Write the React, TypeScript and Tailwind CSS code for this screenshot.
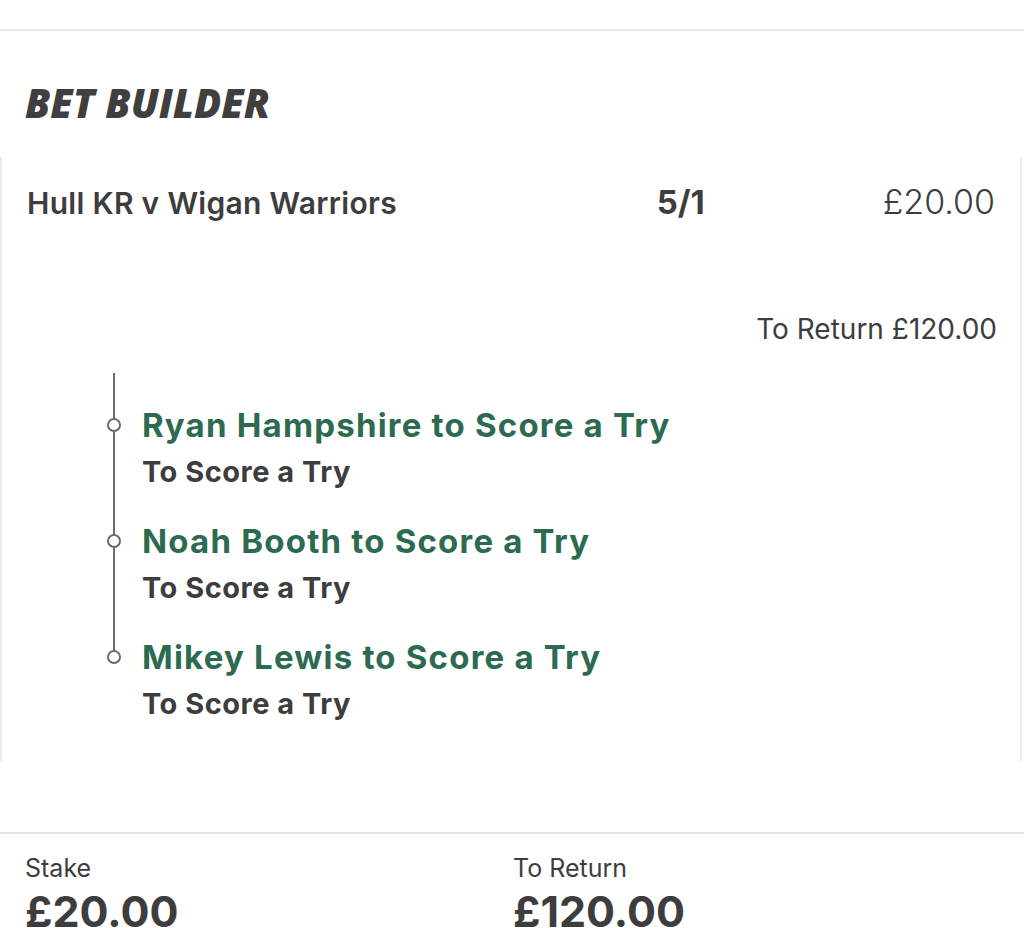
import React from 'react';

const selections = [
  { name: 'Ryan Hampshire to Score a Try', market: 'To Score a Try' },
  { name: 'Noah Booth to Score a Try', market: 'To Score a Try' },
  { name: 'Mikey Lewis to Score a Try', market: 'To Score a Try' },
];

const App: React.FC = () => {
  return (
    <div className="w-[1024px] h-[928px] overflow-hidden bg-white text-[#3d3d3d]" style={{ fontFamily: 'Inter, "Noto Sans", sans-serif' }}>
      {/* top divider */}
      <div className="h-[31px] border-b-2 border-[#e6e6e6]" />

      <h1
        className="pt-[48px] pl-[25px] text-[40px] leading-[48px] font-extrabold italic text-[#3f3f3f]"
        style={{ fontFamily: '"Open Sans", sans-serif' }}
      >
        BET BUILDER
      </h1>

      {/* bet card */}
      <div className="mt-[30px] h-[604px] w-[1022px] border-x-2 border-[#ececec]">
        <div className="flex items-baseline pt-[25px] pl-[25px] pr-[25px] leading-[40px]">
          <div className="flex-1 text-[30px] font-semibold tracking-[0.3px]">Hull KR v Wigan Warriors</div>
          <div className="w-[226px] text-[33px] font-bold">5/1</div>
          <div className="text-[34px] font-light">£20.00</div>
        </div>

        <div className="mt-[89px] pr-[23px] text-right text-[28px] leading-[34px]">To Return £120.00</div>

        {/* legs timeline */}
        <div className="relative mt-[27px] ml-[111px]">
          <div className="absolute left-0 top-0 h-[284px] w-[2px] bg-[#6b6b6b]" />
          <div className="flex flex-col gap-[32px] pt-[32px]">
            {selections.map((s) => (
              <div key={s.name} className="relative pl-[29px]">
                <span className="absolute left-[-6px] top-[13px] h-[14px] w-[14px] rounded-full border-2 border-[#6b6b6b] bg-white" />
                <div className="text-[33px] leading-[40px] font-bold tracking-[1.2px] text-[#2c6b4f]">{s.name}</div>
                <div className="mt-[10px] text-[29px] leading-[34px] font-bold tracking-[0.5px]">{s.market}</div>
              </div>
            ))}
          </div>
        </div>
      </div>

      {/* footer totals */}
      <div className="mt-[71px] flex border-t-2 border-[#e6e6e6] pt-[19px] pl-[25px]">
        <div className="w-[488px]">
          <div className="text-[25px] leading-[30px]">Stake</div>
          <div className="mt-[4px] text-[43px] leading-[48px] font-bold">£20.00</div>
        </div>
        <div>
          <div className="text-[25px] leading-[30px]">To Return</div>
          <div className="mt-[4px] text-[43px] leading-[48px] font-bold">£120.00</div>
        </div>
      </div>
    </div>
  );
};

export default App;
